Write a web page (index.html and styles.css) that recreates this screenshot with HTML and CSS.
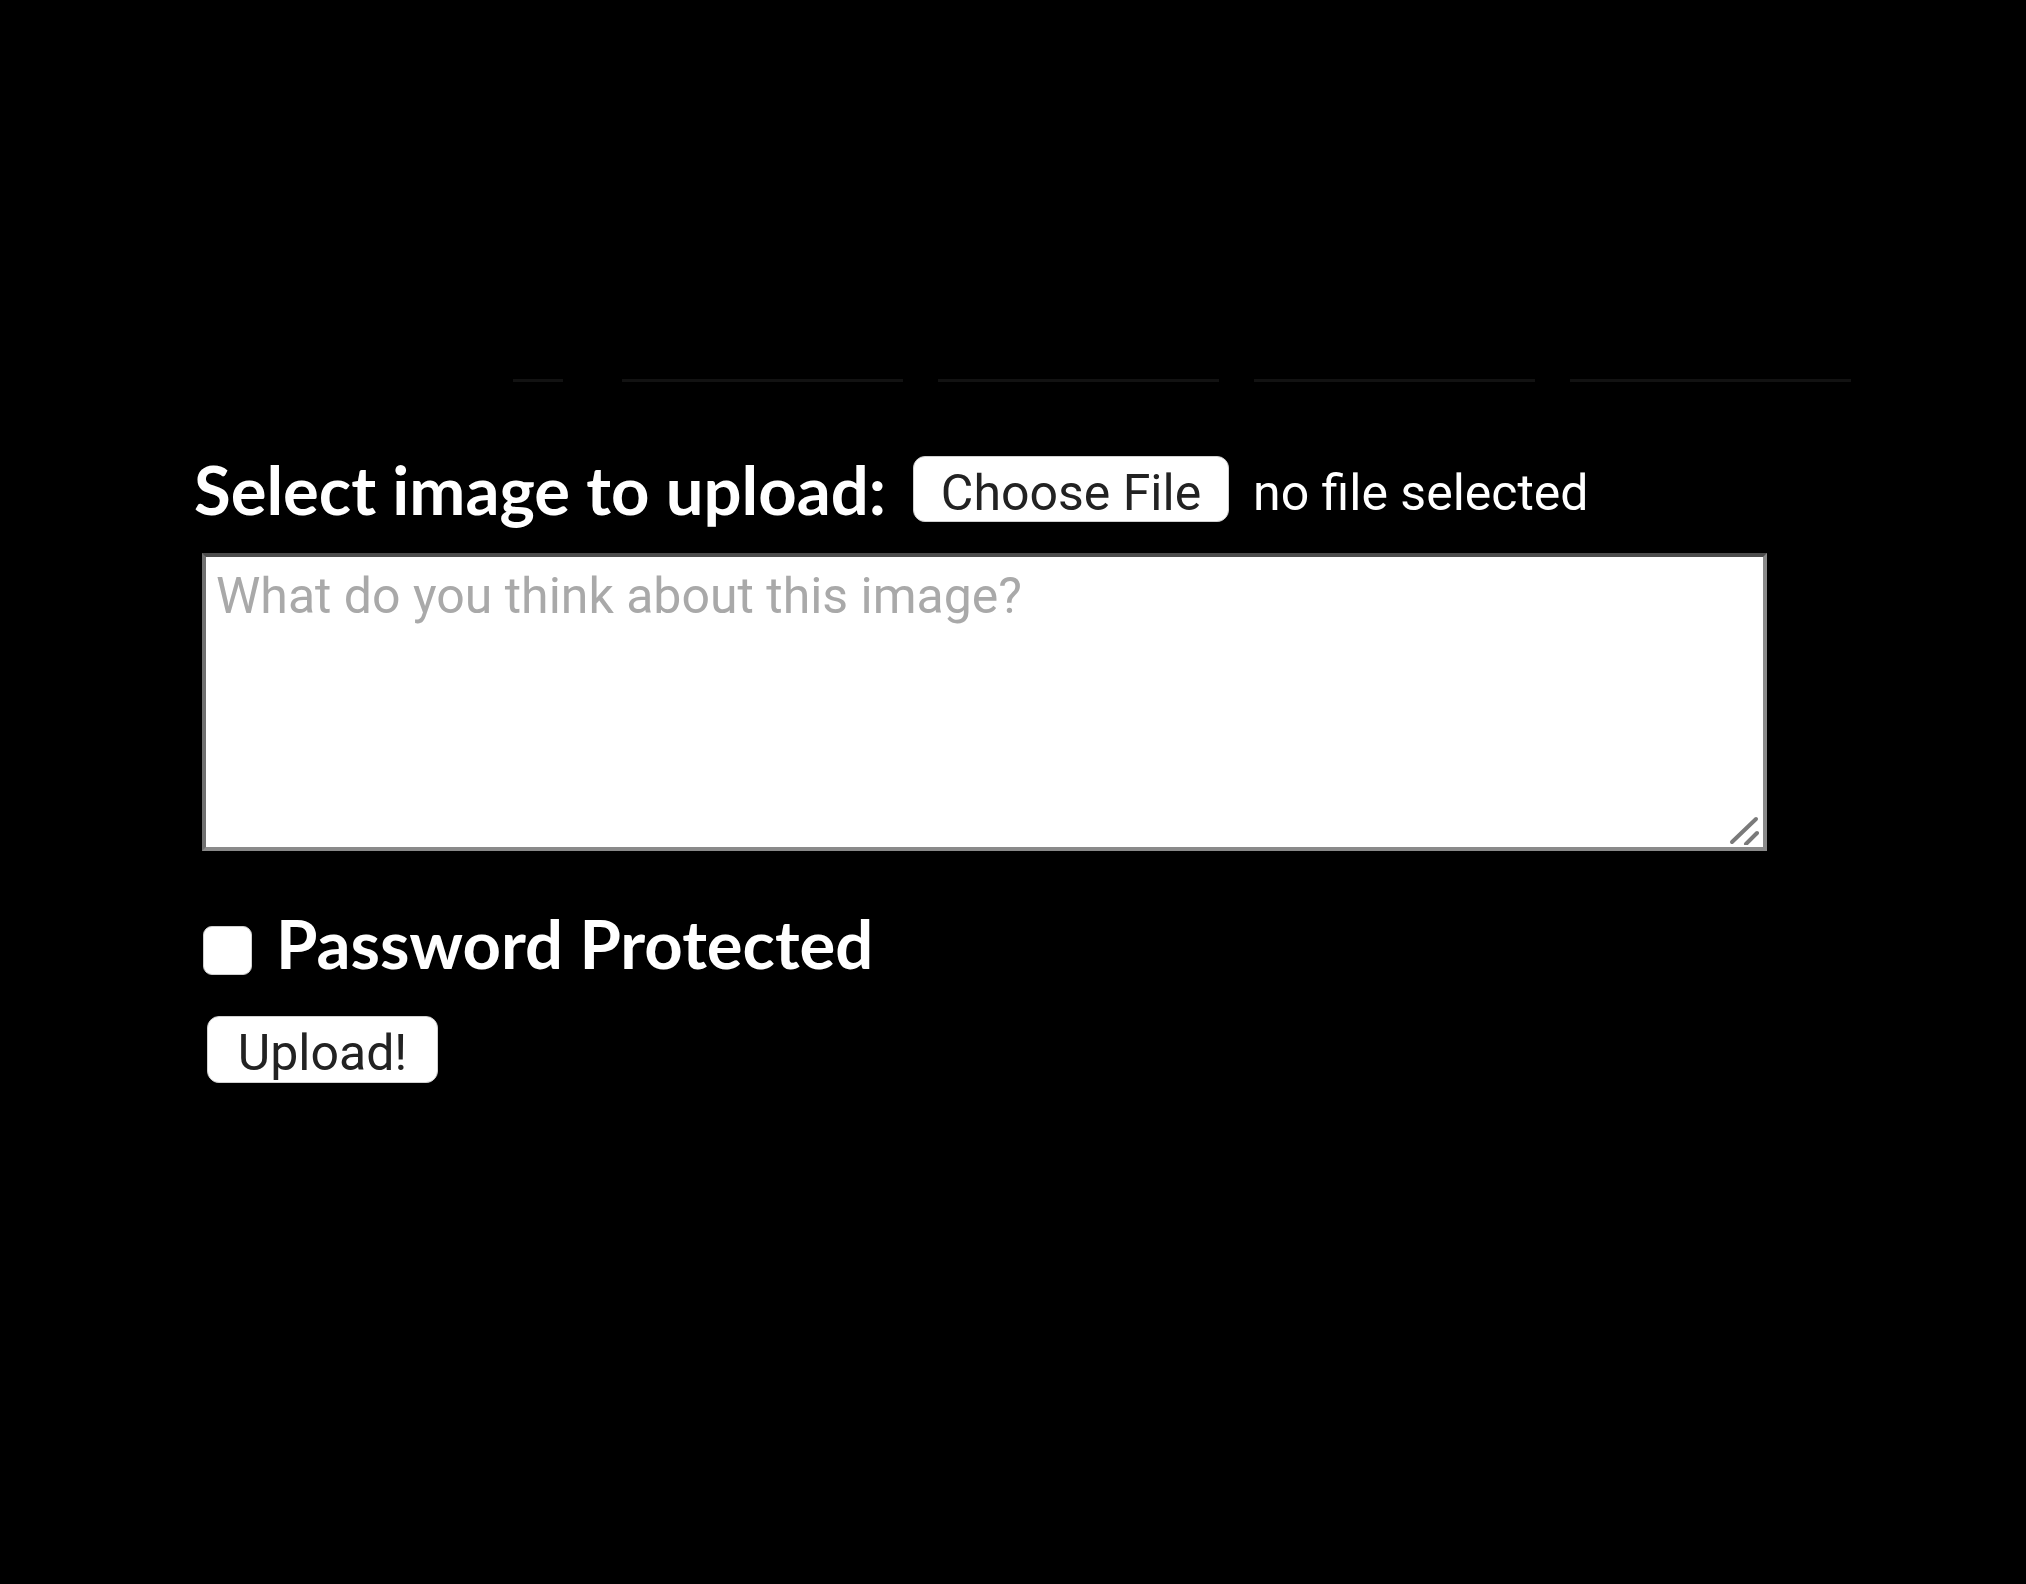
FILE: index.html
```html
<!DOCTYPE html>
<html lang="en">
<head>
<meta charset="utf-8">
<title>Upload</title>
<link rel="stylesheet" href="styles.css">
</head>
<body>
<div class="page">
  <nav class="nav">
    <span class="nav-item nav-first"></span>
    <span class="nav-item"></span>
    <span class="nav-item"></span>
    <span class="nav-item"></span>
    <span class="nav-item"></span>
  </nav>
  <form class="form">
    <div class="file-row">
      <label class="big-label">Select image to upload:</label>
      <button type="button" class="btn btn-file">Choose File</button>
      <span class="file-status">no file selected</span>
    </div>
    <div class="text-wrap">
      <textarea class="comment" placeholder="What do you think about this image?"></textarea>
      <svg class="grip" width="30" height="30" viewBox="0 0 30 30">
        <line x1="3" y1="27" x2="27" y2="4" stroke="#7a7a7a" stroke-width="4" stroke-linecap="round"/>
        <line x1="17" y1="29" x2="28" y2="18" stroke="#7a7a7a" stroke-width="4" stroke-linecap="round"/>
      </svg>
    </div>
    <div class="check-row">
      <input type="checkbox" class="check" id="pw">
      <label for="pw" class="big-label check-label">Password Protected</label>
    </div>
    <button type="submit" class="btn btn-upload">Upload!</button>
  </form>
</div>
</body>
</html>
```
FILE: styles.css
```css
html, body {
  margin: 0;
  padding: 0;
  background: #000;
}
body {
  width: 2026px;
  height: 1584px;
  overflow: hidden;
  font-family: Roboto, "Liberation Sans", sans-serif;
}
.page {
  padding-top: 379px;
}
.nav {
  display: flex;
  margin-left: 513px;
  gap: 35px;
}
.nav-item {
  display: block;
  width: 281px;
  height: 0;
  border-bottom: 3px solid #121212;
}
.nav-first {
  width: 50px;
  margin-right: 24px;
}
.form {
  padding-left: 194px;
  margin-top: 67px;
}
.file-row {
  display: flex;
  align-items: center;
}
.big-label {
  font-family: Lato, "Noto Sans", sans-serif;
  font-weight: 700;
  font-size: 67px;
  color: #fff;
  line-height: 80px;
}
.check-label {
  line-height: 68px;
  padding-bottom: 12px;
}
.btn {
  background: #fff;
  color: #222;
  font-family: Roboto, "Liberation Sans", sans-serif;
  font-size: 50px;
  border: 1px solid #d0d0d0;
  border-radius: 12px;
  padding: 0;
  display: flex;
  align-items: center;
  justify-content: center;
}
.btn-file {
  width: 316px;
  height: 66px;
  margin-left: 27px;
  padding-top: 7px;
}
.file-status {
  color: #fff;
  font-size: 50px;
  margin-left: 24px;
  padding-top: 7px;
}
.text-wrap {
  position: relative;
  width: 1565px;
  height: 298px;
  margin-left: 8px;
  margin-top: 24px;
}
.comment {
  display: block;
  box-sizing: border-box;
  width: 100%;
  height: 100%;
  margin: 0;
  resize: none;
  background: #fff;
  border-style: solid;
  border-width: 4px;
  border-color: #4d4d4d #8a8a8a #8a8a8a #707070;
  padding: 10px 10px;
  font-family: Roboto, "Liberation Sans", sans-serif;
  font-size: 50px;
  color: #222;
  outline: none;
}
.comment::placeholder {
  color: #a9a9a9;
}
.grip {
  position: absolute;
  right: 8px;
  bottom: 6px;
}
.check-row {
  display: flex;
  align-items: center;
  margin-top: 58px;
  margin-left: 9px;
}
.check {
  appearance: none;
  -webkit-appearance: none;
  width: 49px;
  height: 49px;
  margin: 3px 24px 0 0;
  background: #fff;
  border: 1px solid #cfcfcf;
  border-radius: 9px;
}
.btn-upload {
  width: 231px;
  height: 67px;
  margin-left: 13px;
  margin-top: 27px;
  padding-top: 7px;
}
```
